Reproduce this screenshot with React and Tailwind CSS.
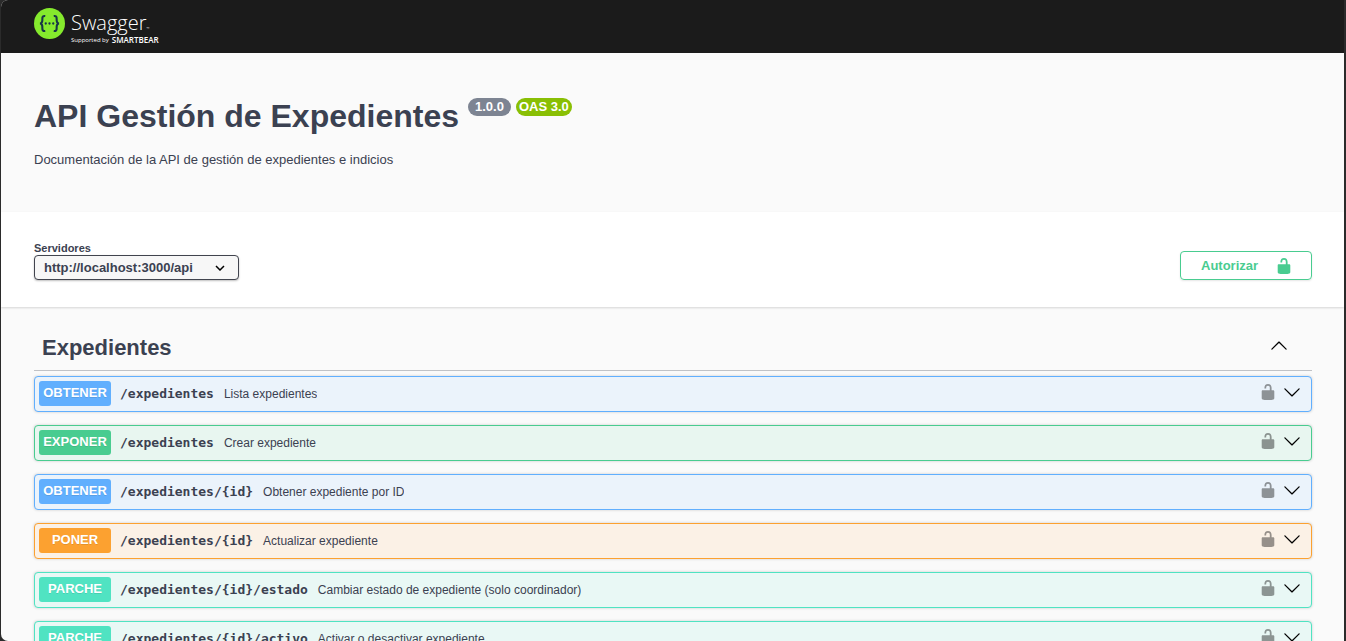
import React from "react";

const METHODS = {
  get: { label: "OBTENER", badge: "bg-[#61affe]", row: "border-[#61affe] bg-[#ebf3fb]" },
  post: { label: "EXPONER", badge: "bg-[#49cc90]", row: "border-[#49cc90] bg-[#e8f6f0]" },
  put: { label: "PONER", badge: "bg-[#fca130]", row: "border-[#fca130] bg-[#fbf1e6]" },
  patch: { label: "PARCHE", badge: "bg-[#50e3c2]", row: "border-[#50e3c2] bg-[#e9f8f5]" },
};

const OPERATIONS = [
  { method: "get", path: "/expedientes", summary: "Lista expedientes" },
  { method: "post", path: "/expedientes", summary: "Crear expediente" },
  { method: "get", path: "/expedientes/{id}", summary: "Obtener expediente por ID" },
  { method: "put", path: "/expedientes/{id}", summary: "Actualizar expediente" },
  { method: "patch", path: "/expedientes/{id}/estado", summary: "Cambiar estado de expediente (solo coordinador)" },
  { method: "patch", path: "/expedientes/{id}/activo", summary: "Activar o desactivar expediente" },
];

function UnlockIcon({ className }) {
  return (
    <svg viewBox="0 0 20 20" className={className} fill="currentColor" aria-hidden="true">
      <path d="M15.8 8H14V5.6C14 2.703 12.665 1 10 1 7.334 1 6 2.703 6 5.6V6h2v-.801C8 3.754 8.797 3 10 3c1.203 0 2 .754 2 2.199V8H4c-.553 0-1 .646-1 1.199V17c0 .549.428 1.139.951 1.307l1.197.387C5.672 18.861 6.55 19 7.1 19h5.8c.549 0 1.428-.139 1.951-.307l1.196-.387c.524-.167.953-.757.953-1.306V9.199C17 8.646 16.352 8 15.8 8z" />
    </svg>
  );
}

function ArrowIcon({ className }) {
  return (
    <svg viewBox="0 0 20 20" className={className} fill="currentColor" aria-hidden="true">
      <path d="M17.418 6.109c.272-.268.709-.268.979 0s.271.701 0 .969l-7.908 7.83c-.27.268-.707.268-.979 0l-7.908-7.83c-.27-.268-.27-.701 0-.969s.709-.268.979 0L10 13.25z" />
    </svg>
  );
}

function Logo() {
  return (
    <a href="#inicio" className="flex items-start gap-[6px] text-white" aria-label="Swagger">
      <svg viewBox="0 0 62 62" className="size-[31px]" aria-hidden="true">
        <circle cx="31" cy="31" r="31" fill="#85ea2d" />
        <g fill="none" stroke="#173647" strokeWidth="4.2">
          <path d="M22.500 16C18 15.500 16.500 17.500 16.700 22C17 27 17 30.500 12 31C17 31.500 17 35 16.700 40C16.500 44.500 18 46.500 22.500 46" />
          <path d="M39.500 16C44 15.500 45.500 17.500 45.300 22C45 27 45 30.500 50 31C45 31.500 45 35 45.300 40C45.500 44.500 44 46.500 39.500 46" />
        </g>
        <g fill="#173647">
          <circle cx="23.500" cy="31" r="2.300" />
          <circle cx="31" cy="31" r="2.300" />
          <circle cx="38.500" cy="31" r="2.300" />
        </g>
      </svg>
      <span className="flex flex-col pt-[3px] font-['Open_Sans','Noto_Sans',sans-serif]">
        <span className="flex items-end text-[20px] leading-[24px] font-light">
          Swagger<span className="text-[4px] leading-[12px]">™</span>
        </span>
        <span className="flex items-center gap-[3px] pt-[1px] text-[6px] leading-[8px]">
          Supported by <span className="text-[8px] font-semibold">SMARTBEAR</span>
        </span>
      </span>
    </a>
  );
}

function Operation({ method, path, summary }) {
  const style = METHODS[method];
  return (
    <li className={`flex h-[36px] items-center rounded-[4px] border pr-[10px] pl-[4px] shadow-[0_0_3px_rgba(0,0,0,0.19)] ${style.row}`}>
      <button type="button" className="flex min-w-0 flex-1 items-center text-left">
        <span className={`mb-px h-[25px] w-[72px] shrink-0 rounded-[3px] text-center text-[13px] leading-[24px] font-bold text-white [text-shadow:0_1px_0_rgba(0,0,0,0.1)] ${style.badge}`}>
          {style.label}
        </span>
        <span className="pl-[9px] font-['DejaVu_Sans_Mono',monospace] text-[13px] leading-[20px] font-bold">{path}</span>
        <span className="truncate pl-[10px] text-[12px] leading-[20px]">{summary}</span>
      </button>
      <button type="button" aria-label={`Autorizar ${path}`} className="mr-[6px] pb-[4px] text-black/40">
        <UnlockIcon className="size-[18px]" />
      </button>
      <button type="button" aria-label={`Desplegar ${path}`} className="pb-[4px] text-black">
        <ArrowIcon className="size-[18px]" />
      </button>
    </li>
  );
}

export default function App() {
  return (
    <div className="h-screen bg-[#2b2b2b] pr-[2px] pl-[1px] font-['Liberation_Sans',Arial,sans-serif] text-[#3b4151]">
      <div className="h-full overflow-hidden rounded-l-[7px] bg-[#fafafa]">
        <header className="h-[53px] bg-[#1b1b1b] px-[33px] pt-[8px]">
          <div className="flex">
            <Logo />
          </div>
        </header>

        <section className="h-[159px] pr-[32px] pl-[33px] pt-[43px]">
          <div className="flex items-start gap-[5px]">
            <h1 className="pr-[4px] text-[32px] leading-[40px] font-bold">API Gestión de Expedientes</h1>
            <span className="mt-[2px] h-[18px] rounded-full bg-[#7d8492] px-[7px] text-[13px] leading-[17px] font-bold text-white">1.0.0</span>
            <span className="mt-[2px] h-[18px] rounded-full bg-[#89bf04] px-[3px] text-[13px] leading-[17px] font-bold text-white">OAS 3.0</span>
          </div>
          <p className="pt-[14px] text-[13px] leading-[20px]">Documentación de la API de gestión de expedientes e indicios</p>
        </section>

        <section className="flex h-[95px] items-start justify-between bg-white pr-[32px] pl-[33px] pt-[29px] shadow-[0_1px_2px_rgba(0,0,0,0.15)]">
          <div className="flex flex-col">
            <label htmlFor="servers" className="text-[11px] leading-[14px] font-bold">Servidores</label>
            <div className="grid items-center">
              <select
                id="servers"
                className="col-start-1 row-start-1 h-[25px] w-[205px] appearance-none rounded-[4px] border border-[#41444e] bg-[#f7f7f7] pr-[32px] pl-[9px] text-[13px] font-bold shadow-[0_1px_2px_rgba(0,0,0,0.25)]"
              >
                <option>http://localhost:3000/api</option>
              </select>
              <svg viewBox="0 0 10 6" className="pointer-events-none z-10 col-start-1 row-start-1 mr-[14px] h-[6px] w-[10px] justify-self-end" fill="none" stroke="#000" strokeWidth="1.500" aria-hidden="true">
                <path d="M1 1l4 4 4-4" />
              </svg>
            </div>
          </div>
          <button
            type="button"
            className="mt-[10px] flex h-[29px] w-[132px] items-center justify-between rounded-[4px] border border-[#49cc90] pr-[18px] pl-[20px] text-[13px] font-bold text-[#49cc90] shadow-[0_1px_2px_rgba(0,0,0,0.1)]"
          >
            Autorizar
            <UnlockIcon className="size-[18px]" />
          </button>
        </section>

        <main className="pr-[32px] pl-[33px] pt-[18px]">
          <h2 className="border-b border-[#3b4151]/30 text-[22px] leading-[28px] font-bold">
            <button type="button" className="flex h-[45px] w-full items-center justify-between pr-[24px] pl-[8px] text-left">
              Expedientes
              <ArrowIcon className="mb-[4px] size-[18px] rotate-180 text-black" />
            </button>
          </h2>
          <ul className="flex flex-col gap-[13px] pt-[5px]">
            {OPERATIONS.map((op) => (
              <Operation key={op.method + op.path} {...op} />
            ))}
          </ul>
        </main>
      </div>
    </div>
  );
}
